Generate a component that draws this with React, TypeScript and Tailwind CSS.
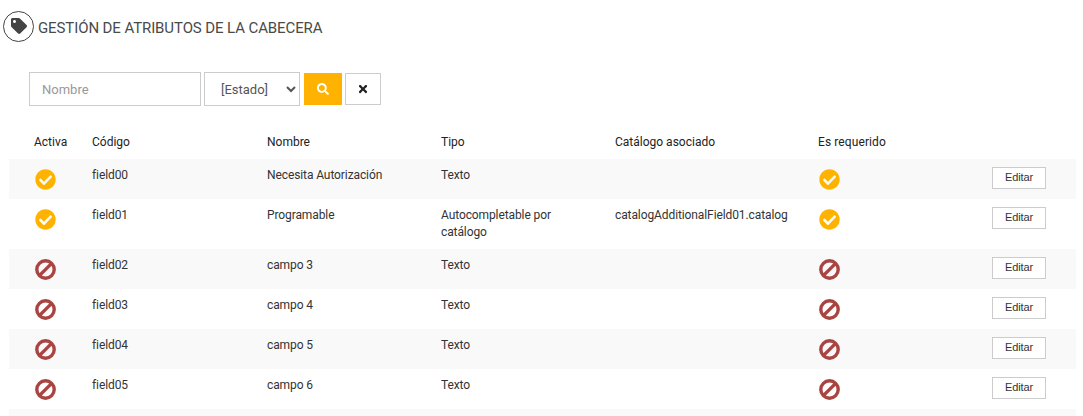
import { FaCheckCircle, FaSearch, FaTag, FaTimes } from 'react-icons/fa'

const ROWS = [
  { code: 'field00', name: 'Necesita Autorización', type: 'Texto', catalog: '', ok: true },
  { code: 'field01', name: 'Programable', type: 'Autocompletable por catálogo', catalog: 'catalogAdditionalField01.catalog', ok: true },
  { code: 'field02', name: 'campo 3', type: 'Texto', catalog: '', ok: false },
  { code: 'field03', name: 'campo 4', type: 'Texto', catalog: '', ok: false },
  { code: 'field04', name: 'campo 5', type: 'Texto', catalog: '', ok: false },
  { code: 'field05', name: 'campo 6', type: 'Texto', catalog: '', ok: false },
]

// thick ban glyph, the package one is too thin
function BanIcon() {
  return (
    <svg width="21" height="21" viewBox="0 0 21 21" fill="none" stroke="#a94442" strokeWidth="3.4">
      <circle cx="10.5" cy="10.5" r="8.7" />
      <path d="M4.6 16.4 16.4 4.6" />
    </svg>
  )
}

function StatusIcon({ ok }: { ok: boolean }) {
  return ok ? <FaCheckCircle size={21} className="text-[#ffb300]" /> : <BanIcon />
}

export default function App() {
  return (
    <div className="w-[1083px] h-[416px] overflow-hidden bg-white font-['Roboto',sans-serif] text-[12px] text-[#333]">
      <div className="flex items-center gap-1 pl-[3px] pt-[11px]">
        <div className="w-[31px] h-[31px] rounded-full border border-[#444] flex items-center justify-center text-[#444]">
          <FaTag size={16} className="-mt-[1px]" />
        </div>
        <h1 className="mt-[3px] text-[15px] tracking-[-0.1px] font-normal text-[#4a4a4a]">GESTIÓN DE ATRIBUTOS DE LA CABECERA</h1>
      </div>

      <div className="flex items-center gap-[3px] pl-[29px] mt-[30px]">
        <input
          placeholder="Nombre"
          className="w-[172px] h-[34px] border border-[#ccc] px-3 text-[13px] placeholder:text-[#999] outline-none"
        />
        <select className="w-[96px] h-[34px] border border-[#ccc] bg-white pl-3 text-[13px] text-[#555] outline-none">
          <option>[Estado]</option>
        </select>
        <button className="w-[38px] h-[32px] ml-[1px] bg-[#ffb300] text-white flex items-center justify-center">
          <FaSearch size={12} />
        </button>
        <button className="w-[36px] h-[32px] border border-[#ccc] bg-white flex items-center justify-center text-[#222]">
          <FaTimes size={12} />
        </button>
      </div>

      <table className="ml-[9px] mt-[18px] w-[1067px] table-fixed border-collapse">
        <colgroup>
          <col className="w-[75px]" />
          <col className="w-[175px]" />
          <col className="w-[174px]" />
          <col className="w-[174px]" />
          <col className="w-[203px]" />
          <col className="w-[174px]" />
          <col />
        </colgroup>
        <thead>
          <tr className="h-[35px] text-left text-[#222]">
            <th className="font-normal pl-[25px] pr-0 whitespace-nowrap">Activa</th>
            <th className="font-normal px-2">Código</th>
            <th className="font-normal px-2">Nombre</th>
            <th className="font-normal px-2">Tipo</th>
            <th className="font-normal px-2">Catálogo asociado</th>
            <th className="font-normal px-2 tracking-[0.1px]">Es requerido</th>
            <th />
          </tr>
        </thead>
        <tbody className="tracking-[-0.1px]">
          {ROWS.map((r) => (
            <tr key={r.code} className="odd:bg-[#f9f9f9] align-top">
              <td className="h-[40px] pl-[26px] pt-[10px]"><StatusIcon ok={r.ok} /></td>
              <td className="h-[40px] px-2 py-2 leading-[17px]">{r.code}</td>
              <td className="h-[40px] px-2 py-2 leading-[17px]">{r.name}</td>
              <td className="h-[40px] px-2 py-2 leading-[17px]">{r.type}</td>
              <td className="h-[40px] px-2 py-2 leading-[17px] whitespace-nowrap">{r.catalog}</td>
              <td className="h-[40px] pl-[9px] pt-[10px]"><StatusIcon ok={r.ok} /></td>
              <td className="h-[40px] pt-2 pl-[8px]">
                <button className="w-[54px] h-[22px] pb-[1px] border border-[#ccc] bg-white text-[11px] font-['Liberation_Sans',sans-serif] text-[#333]">
                  Editar
                </button>
              </td>
            </tr>
          ))}
          <tr className="bg-[#f9f9f9] h-[10px]"><td colSpan={7} /></tr>
        </tbody>
      </table>
    </div>
  )
}
